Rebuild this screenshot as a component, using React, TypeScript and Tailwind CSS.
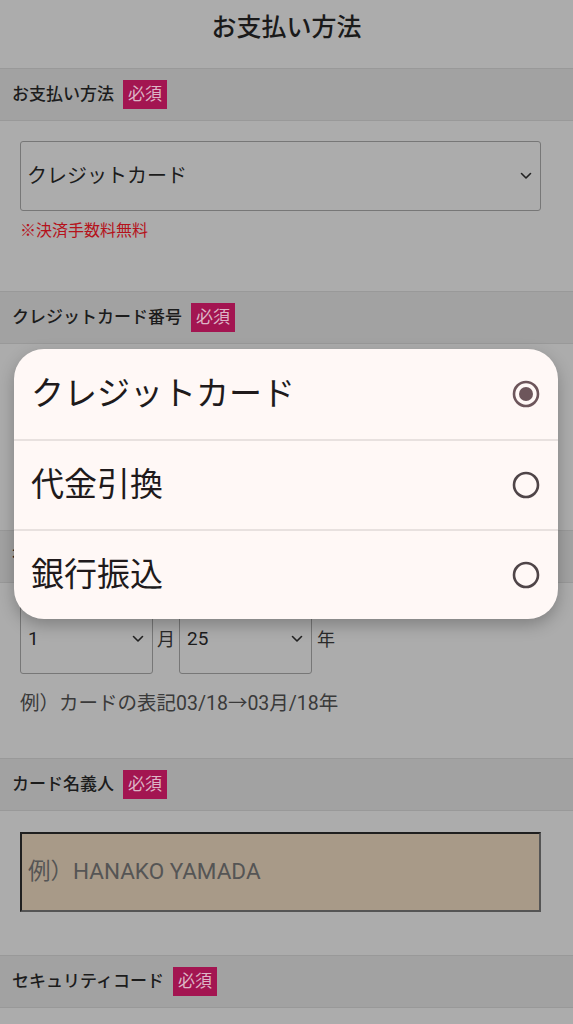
import React from "react";

const FONT = { fontFamily: "Roboto, 'Noto Sans CJK JP', sans-serif" };

function Badge() {
  return (
    <span className="ml-[9px] inline-flex h-[29px] items-center bg-[#a31551] px-[5px] text-[17px] leading-none text-[#dcb5c6]">
      必須
    </span>
  );
}

function SectionHeader({ label }: { label: string }) {
  return (
    <div className="flex h-[53px] items-center border-y border-[#999999] bg-[#a2a2a2] pl-[12px]">
      <span className="text-[17px] font-medium leading-none text-[#1c1c1c]">{label}</span>
      <Badge />
    </div>
  );
}

function Chevron() {
  return (
    <svg width="12" height="8" viewBox="0 0 12 8" fill="none">
      <path d="M1.5 1.5 L6 6 L10.5 1.5" stroke="#222" strokeWidth="1.6" strokeLinecap="round" strokeLinejoin="round" />
    </svg>
  );
}

function Radio({ checked }: { checked?: boolean }) {
  const c = checked ? "#6d565b" : "#4f4548";
  return (
    <svg width="28" height="28" viewBox="0 0 28 28">
      <circle cx="14" cy="14" r="12" fill="none" stroke={c} strokeWidth="2.6" />
      {checked && <circle cx="14" cy="14" r="7" fill={c} />}
    </svg>
  );
}

export default function App() {
  const options = ["クレジットカード", "代金引換", "銀行振込"];
  return (
    <div className="relative min-h-[1024px] w-full overflow-hidden bg-[#acacac]" style={FONT}>
      <div className="flex h-[56px] items-center justify-center">
        <h1 className="text-[25px] font-medium text-[#1a1a1a]">お支払い方法</h1>
      </div>
      <div className="mt-[12px]">
        <SectionHeader label="お支払い方法" />
        <div className="h-[170px] px-[20px] pt-[20px]">
          <div className="flex h-[70px] w-[521px] items-center justify-between rounded-[3px] border border-[#777777] pl-[6px] pr-[8px]">
            <span className="text-[20px] text-[#1c1c1c]">クレジットカード</span>
            <Chevron />
          </div>
          <p className="mt-[8px] text-[16px] text-[#b5121b]">※決済手数料無料</p>
        </div>

        <SectionHeader label="クレジットカード番号" />
        <div className="h-[186px] px-[20px] pt-[22px]">
          <div className="h-[80px] w-[521px] border-2 border-[#555555] border-l-[#1f1f1f] border-t-[#1f1f1f] bg-[#acacac]" />
        </div>

        <SectionHeader label="有効期限" />
        <div className="h-[175px] px-[20px] pt-[21px]">
          <div className="flex items-center">
            <div className="flex h-[70px] w-[133px] items-center justify-between rounded-[3px] border border-[#777777] pl-[7px] pr-[8px]">
              <span className="text-[19px] text-[#1c1c1c]">1</span>
              <Chevron />
            </div>
            <span className="mx-[4px] text-[18px] text-[#2a2a2a]">月</span>
            <div className="flex h-[70px] w-[133px] items-center justify-between rounded-[3px] border border-[#777777] pl-[7px] pr-[8px]">
              <span className="text-[19px] text-[#1c1c1c]">25</span>
              <Chevron />
            </div>
            <span className="ml-[5px] text-[18px] text-[#2a2a2a]">年</span>
          </div>
          <p className="mt-[15px] text-[19.5px] text-[#3a3a3a]">例）カードの表記03/18→03月/18年</p>
        </div>

        <SectionHeader label="カード名義人" />
        <div className="h-[144px] px-[20px] pt-[21px]">
          <div className="flex h-[80px] w-[521px] items-center border-2 border-[#555555] border-l-[#1f1f1f] border-t-[#1f1f1f] bg-[#a89a88] pl-[6px]">
            <span className="text-[22.5px] text-[#555555]">例）HANAKO YAMADA</span>
          </div>
        </div>

        <SectionHeader label="セキュリティコード" />
        <div className="h-[60px]" />
      </div>

      <div className="absolute left-[14px] top-[349px] w-[544px] overflow-hidden rounded-[30px] bg-[#fff8f6] shadow-[0_6px_16px_rgba(0,0,0,0.25)]">
        {options.map((o, i) => (
          <div
            key={o}
            className={`flex h-[90px] items-center justify-between pl-[17px] pr-[18px] ${i > 0 ? "border-t-2 border-[#e8e1df]" : ""}`}
          >
            <span className="text-[33px] text-[#201a1b]">{o}</span>
            <Radio checked={i === 0} />
          </div>
        ))}
      </div>
    </div>
  );
}
